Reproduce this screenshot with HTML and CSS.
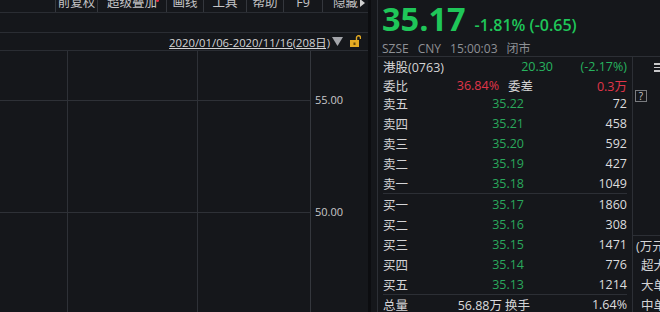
FILE: index.html
```html
<!DOCTYPE html>
<html lang="zh-CN">
<head>
<meta charset="utf-8">
<link rel="stylesheet" href="styles.css">
</head>
<body>
<div class="left">
  <div class="toolbar">
    <div class="tb-item w42">前复权</div>
    <div class="tb-item w69 has-dot">超级叠加<span class="dot"></span></div>
    <div class="tb-item w37">画线</div>
    <div class="tb-item w43">工具</div>
    <div class="tb-item w37">帮助</div>
    <div class="tb-item w39">F9</div>
    <div class="tb-item w46 hide">隐藏<span class="tri-r"></span></div>
  </div>
  <div class="subbar"></div>
  <div class="datebar">
    <span class="range">2020/01/06-2020/11/16(208日)</span>
    <svg class="tri-d" width="11" height="9" viewBox="0 0 11 9"><polygon points="0,0 11,0 5.5,9" fill="#a3a5aa"/></svg>
    <svg class="lock" width="11" height="12" viewBox="0 0 11 12">
      <rect x="0" y="5" width="9" height="7" fill="#e4ab23"/>
      <rect x="3.5" y="7.5" width="2" height="2.5" fill="#6b4c0a"/>
      <path d="M6.5 5 V2.8 A2 2 0 0 1 10.5 2.8 V4" fill="none" stroke="#e4ab23" stroke-width="1.4"/>
    </svg>
  </div>
  <div class="chart">
    <svg width="368" height="261" viewBox="0 0 368 261">
      <line x1="67.5" y1="0" x2="67.5" y2="261" stroke="#2e3137"/>
      <line x1="197.5" y1="0" x2="197.5" y2="261" stroke="#2e3137"/>
      <line x1="310.5" y1="0" x2="310.5" y2="261" stroke="#34373d"/>
      <line x1="0" y1="49.5" x2="310" y2="49.5" stroke="#2e3137"/>
      <line x1="0" y1="161.5" x2="310" y2="161.5" stroke="#2e3137"/>
      <text x="315" y="53" class="axis">55.00</text>
      <text x="315" y="165" class="axis">50.00</text>
    </svg>
  </div>
</div>
<div class="divider"></div>
<div class="right">
  <div class="rin">
    <div class="head">
      <div class="price-line">
        <span class="big">35.17</span>
        <span class="chg">-1.81% (-0.65)</span>
      </div>
      <div class="meta">
        <span>SZSE</span><span>CNY</span><span>15:00:03</span><span>闭市</span>
      </div>
    </div>
    <div class="body">
      <div class="book">
        <div class="row hk"><span>港股(0763)</span><span class="g r">20.30</span><span class="g r">(-2.17%)</span></div>
        <div class="row wb"><span>委比</span><span class="red r">36.84%</span><span class="wc">委差</span><span class="red r">0.3万</span></div>
        <div class="block sell">
          <div class="row ob"><span>卖五</span><span class="g2 r">35.22</span><span class="vol r">72</span></div>
          <div class="row ob"><span>卖四</span><span class="g2 r">35.21</span><span class="vol r">458</span></div>
          <div class="row ob"><span>卖三</span><span class="g2 r">35.20</span><span class="vol r">592</span></div>
          <div class="row ob"><span>卖二</span><span class="g2 r">35.19</span><span class="vol r">427</span></div>
          <div class="row ob"><span>卖一</span><span class="g2 r">35.18</span><span class="vol r">1049</span></div>
        </div>
        <div class="block buy">
          <div class="row ob"><span>买一</span><span class="g2 r">35.17</span><span class="vol r">1860</span></div>
          <div class="row ob"><span>买二</span><span class="g2 r">35.16</span><span class="vol r">308</span></div>
          <div class="row ob"><span>买三</span><span class="g2 r">35.15</span><span class="vol r">1471</span></div>
          <div class="row ob"><span>买四</span><span class="g2 r">35.14</span><span class="vol r">776</span></div>
          <div class="row ob"><span>买五</span><span class="g2 r">35.13</span><span class="vol r">1214</span></div>
        </div>
        <div class="row tot"><span>总量</span><span class="vol r">56.88万</span><span class="hs">换手</span><span class="vol r">1.64%</span></div>
      </div>
      <div class="side">
        <div class="side-top">
          <div class="menu"><i></i><i></i><i></i></div>
          <div class="qbox">?</div>
        </div>
        <div class="side-list">
          <div class="unit">(万元</div>
          <div class="sl">超大</div>
          <div class="sl">大单</div>
          <div class="sl">中单</div>
        </div>
      </div>
    </div>
  </div>
</div>
</body>
</html>
```

FILE: styles.css
```css
* { box-sizing: border-box; }
html, body { margin: 0; padding: 0; }
body {
  width: 660px;
  height: 312px;
  overflow: hidden;
  background: #15171b;
  display: flex;
  font-family: "Open Sans", "Noto Sans CJK SC", sans-serif;
  color: #d4d4d6;
}
.left {
  width: 368px;
  display: flex;
  flex-direction: column;
  flex-shrink: 0;
}
.toolbar {
  height: 13px;
  border-bottom: 1px solid #2a2d33;
  display: flex;
  align-items: flex-end;
  padding-left: 55px;
  font-size: 12.5px;
  color: #c4c4c6;
}
.tb-item {
  height: 17px;
  line-height: 15px;
  border-left: 1px solid #34373d;
  text-align: center;
  position: relative;
  flex-shrink: 0;
}
.w42 { width: 42px; }
.w69 { width: 69px; }
.w37 { width: 37px; }
.w43 { width: 43px; }
.w39 { width: 39px; }
.w46 { width: 46px; }
.dot {
  position: absolute;
  width: 3px;
  height: 3px;
  border-radius: 50%;
  background: #e8304a;
  right: 7px;
  top: 4px;
}
.hide { text-align: left; padding-left: 10px; }
.tri-r {
  display: inline-block;
  width: 0; height: 0;
  border-top: 4px solid transparent;
  border-bottom: 4px solid transparent;
  border-left: 5px solid #d0d0d0;
  margin-left: 2px;
}
.subbar {
  height: 20px;
  border-bottom: 1px solid #2a2d33;
}
.datebar {
  height: 18px;
  border-bottom: 1px solid #2a2d33;
  display: flex;
  justify-content: flex-end;
  align-items: center;
  padding-right: 7px;
}
.range {
  font-size: 11.3px;
  color: #d4d4d6;
  text-decoration: underline;
}
.tri-d { margin-left: 2px; }
.lock { margin-left: 7px; margin-top: -2px; }
.chart { flex: 1; overflow: hidden; }
.chart svg { display: block; }
.axis {
  font-family: "Open Sans", sans-serif;
  font-size: 11px;
  fill: #c8c8ca;
}
.divider {
  width: 3px;
  background: #0c0d10;
  flex-shrink: 0;
}
.right {
  flex: 1;
  padding-left: 6px;
  display: flex;
}
.rin {
  flex: 1;
  border-left: 1px solid #2c2f35;
  display: flex;
  flex-direction: column;
}
.head {
  height: 57px;
  border-bottom: 1px solid #2c2f35;
  padding-left: 4px;
}
.price-line {
  display: flex;
  align-items: baseline;
  height: 42px;
  padding-top: 1px;
}
.big {
  font-size: 32.5px;
  font-weight: 700;
  color: #1fc659;
  line-height: 36px;
}
.chg {
  font-size: 16px;
  font-weight: 600;
  color: #1fc659;
  margin-left: 9px;
}
.meta {
  display: flex;
  gap: 9px;
  font-size: 12px;
  color: #8e9095;
  line-height: 14px;
}
.body {
  flex: 1;
  display: flex;
}
.book {
  width: 255px;
  border-right: 1px solid #2c2f35;
  padding: 0 5px 0 5px;
  font-size: 12.5px;
  color: #d4d4d6;
}
.row {
  display: grid;
  align-items: center;
  white-space: nowrap;
}
.r { text-align: right; }
.g { color: #27b35f; }
.g2 { color: #2aa85c; }
.red { color: #e03549; }
.vol { color: #dcdcde; }
.hk { height: 19px; grid-template-columns: 1fr 60px 74px; }
.wb { height: 16px; grid-template-columns: 57px 59px 1fr auto; }
.wc { margin-left: 9px; }
.block { border-bottom: 1px solid #2c2f35; }
.sell { padding-top: 1px; }
.ob { height: 20px; grid-template-columns: 91px 50px 1fr; }
.tot { height: 19px; grid-template-columns: 57px 62px 1fr auto; }
.hs { margin-left: 3px; }
.side {
  flex: 1;
  display: flex;
  flex-direction: column;
  overflow: hidden;
}
.side-top {
  height: 179px;
  border-bottom: 1px solid #2c2f35;
  position: relative;
}
.menu {
  margin: 6px 0 0 21px;
  width: 9px;
  display: flex;
  flex-direction: column;
  gap: 2px;
}
.menu i {
  display: block;
  height: 1.5px;
  background: #c8c8ca;
}
.qbox {
  margin: 18px 0 0 2px;
  width: 12px;
  height: 12px;
  border: 1px solid #7a7c80;
  font-size: 10px;
  line-height: 10px;
  text-align: center;
  color: #c8c8ca;
}
.side-list {
  font-size: 12.5px;
  color: #d4d4d6;
  white-space: nowrap;
}
.unit { padding-left: 3px; height: 20px; line-height: 22px; }
.sl { padding-left: 8px; height: 20px; line-height: 20px; }
```
